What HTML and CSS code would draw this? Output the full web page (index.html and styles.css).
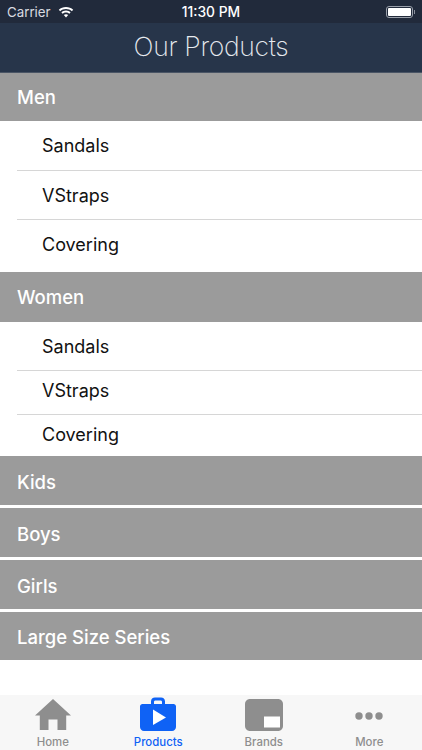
FILE: index.html
```html
<!DOCTYPE html>
<html lang="en">
<head>
<meta charset="utf-8">
<title>Our Products</title>
<link rel="stylesheet" href="styles.css">
</head>
<body>
<div class="app">
  <div class="status">
    <div class="status-left">
      <span>Carrier</span>
      <svg class="wifi" viewBox="0 0 16 12" width="16" height="12"><path d="M8 1C5.200 1 2.700 2 .8 3.800l1.300 1.400C3.700 3.700 5.700 2.900 8 2.900s4.300.8 5.900 2.300l1.300-1.400C13.300 2 10.800 1 8 1z"/><path d="M8 4.600c-1.800 0-3.400.7-4.600 1.800l1.300 1.400C5.600 7 6.700 6.500 8 6.500s2.400.5 3.300 1.300l1.300-1.400C11.400 5.300 9.800 4.600 8 4.600z"/><path d="M8 8.200c-.9 0-1.600.3-2.200.9L8 11.400l2.200-2.300c-.6-.6-1.300-.9-2.200-.9z"/></svg>
    </div>
    <span class="clock">11:30 PM</span>
    <div class="battery"><div class="battery-body"><div class="battery-fill"></div></div><div class="battery-tip"></div></div>
  </div>
  <header class="nav">Our Products</header>
  <main class="list">
    <div class="head head-men">Men</div>
    <div class="item tall">Sandals</div>
    <div class="item tall">VStraps</div>
    <div class="item tall last">Covering</div>
    <div class="head head-women">Women</div>
    <div class="item mid">Sandals</div>
    <div class="item short">VStraps</div>
    <div class="item low last">Covering</div>
    <div class="head head-low">Kids</div>
    <div class="head head-low spaced">Boys</div>
    <div class="head head-low spaced">Girls</div>
    <div class="head head-low spaced head-end">Large Size Series</div>
  </main>
  <nav class="tabs">
    <div class="tab">
      <svg class="tab-icon" viewBox="0 0 36 32" width="36" height="32"><path fill="#8e8e8e" d="M18 0 0 16.500h4.800V31h8.700V20.500h9V31h8.700V16.500H36z"/></svg>
      <span>Home</span>
    </div>
    <div class="tab active">
      <svg class="tab-icon" viewBox="0 0 36 34" width="36" height="34"><path fill="#0f62f5" d="M11 7V4.500C11 2 12.600.500 15 .500h6c2.400 0 4 1.500 4 4V7h8.500c1.400 0 2.500 1.100 2.500 2.500V30c0 2.200-1.800 4-4 4H4c-2.200 0-4-1.800-4-4V9.500C0 8.100 1.100 7 2.500 7zM14 7h8V5c0-1-.6-1.500-1.500-1.500h-5C14.600 3.500 14 4 14 5z"/><path fill="#fff" d="M13 12.500 26 20.500 13 28z"/></svg>
      <span>Products</span>
    </div>
    <div class="tab">
      <svg class="tab-icon" viewBox="0 0 38 32" width="38" height="32"><path fill="#8e8e8e" d="M5 0h28c2.800 0 5 2.200 5 5v22c0 2.800-2.200 5-5 5H5c-2.800 0-5-2.200-5-5V5c0-2.800 2.200-5 5-5z"/><rect fill="#fff" x="19" y="17.500" width="16" height="11"/></svg>
      <span>Brands</span>
    </div>
    <div class="tab">
      <svg class="tab-icon" viewBox="0 0 28 32" width="28" height="32"><g fill="#8e8e8e"><circle cx="4" cy="17" r="3.700"/><circle cx="14" cy="17" r="3.700"/><circle cx="24" cy="17" r="3.700"/></g></svg>
      <span>More</span>
    </div>
  </nav>
</div>
</body>
</html>
```
FILE: styles.css
```css
* { box-sizing: border-box; }
html, body { margin: 0; padding: 0; }
body { font-family: Inter, "Liberation Sans", sans-serif; background: #fff; }
.app { width: 422px; height: 750px; display: flex; flex-direction: column; overflow: hidden; }

.status { height: 23px; background: #212a3b; color: #d8dbe0; display: flex; align-items: center; justify-content: space-between; padding: 0 7px; font-size: 13.300px; position: relative; }
.status-left { display: flex; align-items: center; gap: 7px; }
.wifi { fill: #fff; }
.clock { position: absolute; left: 0; right: 0; text-align: center; color: #fff; font-weight: 500; font-size: 13.800px; }
.battery { display: flex; align-items: center; gap: 1px; }
.battery-body { width: 27px; height: 12px; border: 1px solid #9aa0aa; border-radius: 3px; padding: 1px; }
.battery-fill { height: 100%; background: #fff; border-radius: 1px; }
.battery-tip { width: 1px; height: 4px; background: #8a909c; }

.nav { height: 50px; padding-bottom: 3px; background: #27354a; color: #e6eaef; font-weight: 200; font-size: 26.500px; letter-spacing: -0.3px; display: flex; align-items: center; justify-content: center; border-bottom: 1px solid #4a5565; }

.list { flex: 1; display: flex; flex-direction: column; }
.head { background: #9b9b9b; color: #fff; font-size: 18.500px; font-weight: 500; padding-left: 17px; display: flex; align-items: center; height: 49px; }
.head-men { height: 48px; }
.head-women { margin-top: 2px; height: 50px; }
.head-low { padding-top: 3px; }
.spaced { margin-top: 3px; }
.head-end { height: 48px; }
.item { margin-left: 17px; padding-left: 25px; color: #111; font-size: 18px; display: flex; align-items: center; border-bottom: 1px solid #d6d6d6; }
.item.last { border-bottom: 0; }
.tall { height: 49.500px; padding-top: 1px; }
.tall.last { padding-top: 0; }
.mid { height: 49px; padding-top: 1px; }
.short { height: 44px; padding-bottom: 3px; }
.low { height: 41px; padding-bottom: 2px; }

.tabs { height: 55px; background: #f7f7f7; display: grid; grid-template-columns: repeat(4, 1fr); }
.tab { display: flex; flex-direction: column; align-items: center; justify-content: flex-end; color: #8e8e8e; font-size: 11.400px; font-weight: 500; padding-bottom: 1px; }
.tab-icon { margin-bottom: 4px; }
.tab.active { color: #0f62f5; }
```
